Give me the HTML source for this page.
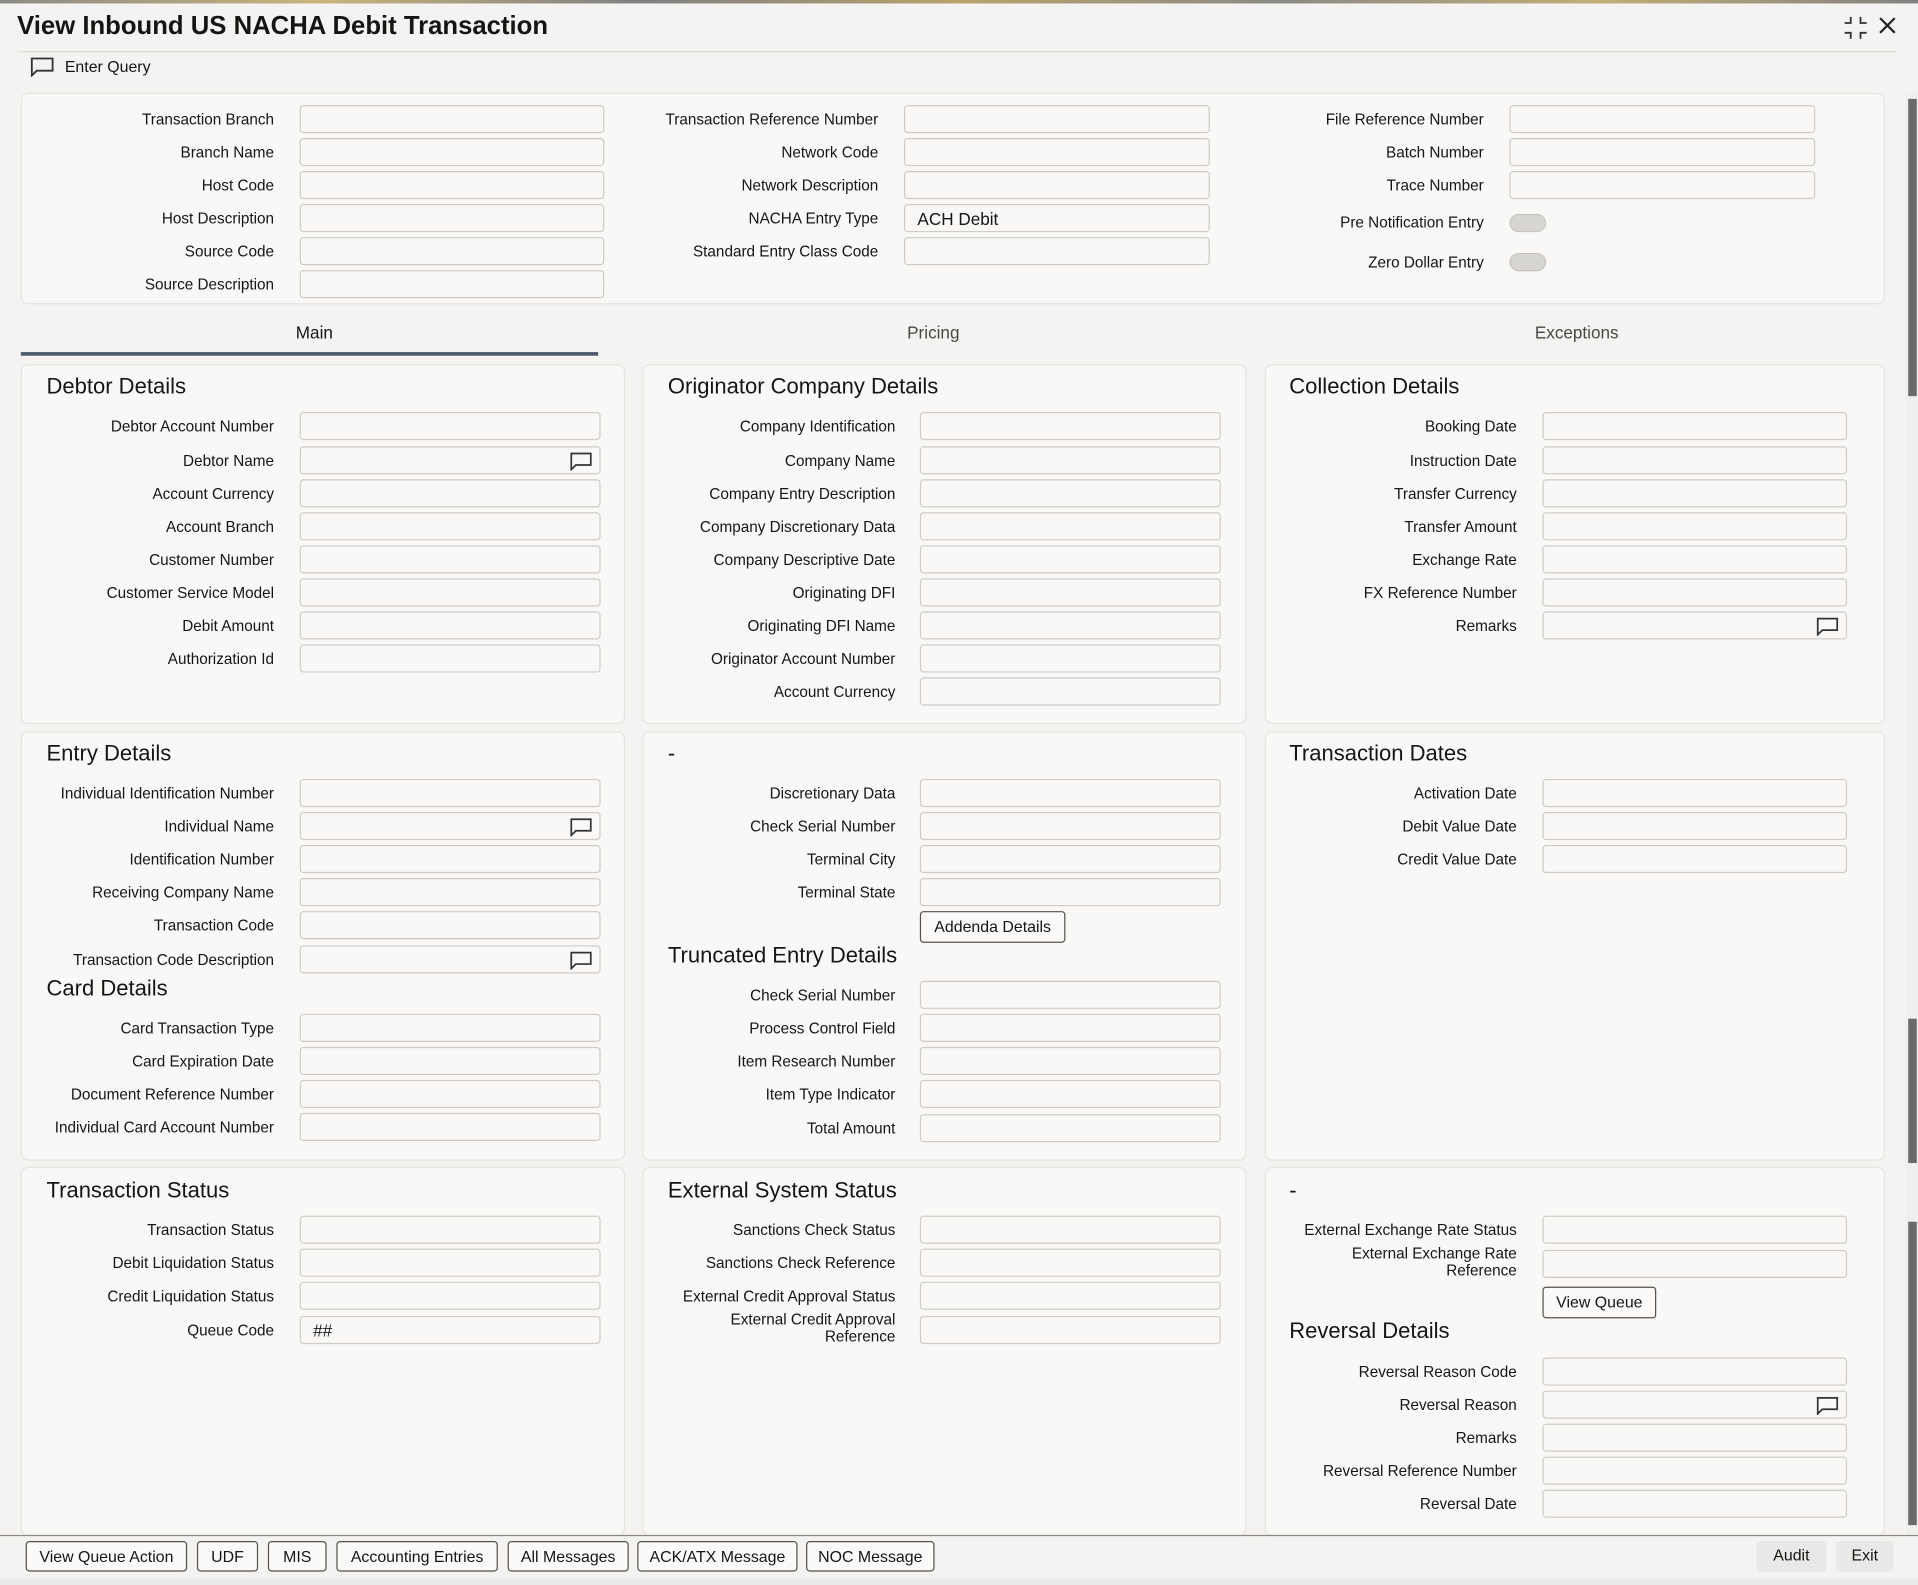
<!DOCTYPE html>
<html><head><meta charset="utf-8"><style>
html,body{margin:0;padding:0;background:#f4f3f1;overflow:hidden}
body{width:1918px;height:1585px;position:relative}
#s{position:absolute;left:0;top:1px;width:1568px;height:1296px;transform:scale(1.22321);transform-origin:0 0;font-family:"Liberation Sans",sans-serif;color:#161513;font-size:12.5px}
.abs{position:absolute}
.pan{position:absolute;background:#f9f8f7;border:1px solid #e6e4e1;border-radius:6px}
.f{position:absolute;left:0;width:1568px;height:24px}
.f .l{position:absolute;left:0;text-align:right;line-height:24px;white-space:nowrap}
.f .i{position:absolute;top:0;height:23px;border:1px solid #cfccc8;border-radius:3px;background:#f9f8f7;box-sizing:border-box;font-size:14px;line-height:22px;padding-left:10px}
.h1 .l{width:224px}.h1 .i{left:245px;width:249px}
.h2 .l{width:718px}.h2 .i{left:739px;width:250px}
.h3 .l{width:1213px}.h3 .i{left:1234px;width:250px}
.p1 .l{width:224px}.p1 .i{left:245px;width:246px}
.p2 .l{width:732px}.p2 .i{left:752px;width:246px}
.p3 .l{width:1240px}.p3 .i{left:1261px;width:249px}
.two .l{line-height:14px;top:-4px}
.hd{position:absolute;font-size:18px;color:#161513}
.tab{position:absolute;top:263px;font-size:14px;color:#4a4845;transform:translateX(-50%)}
.btn{position:absolute;top:1259px;height:25px;border:1px solid #55524e;border-radius:3px;box-sizing:border-box;font-size:13px;line-height:23px;text-align:center;background:#fbfaf9}
.tg{position:absolute;width:30px;height:15px;border-radius:8px;background:#d8d6d3;border:1px solid #c8c5c1;box-sizing:border-box}
.ic{position:absolute;right:6px;top:4px}
</style></head><body><div id="s">
<div class="abs" style="left:0;top:-1px;width:1568px;height:3px;background:linear-gradient(90deg,#8a8a86,#c9b47a,#7d7f82,#b9a36a,#8a8a86,#c2ae75,#808080)"></div>
<div class="abs" style="left:14px;top:9px;font-size:21px;font-weight:bold">View Inbound US NACHA Debit Transaction</div>
<svg class="abs" style="left:1507px;top:12px" width="20" height="20" viewBox="0 0 20 20" fill="none" stroke="#333" stroke-width="1.5"><path d="M1 6h5V1M14 1v5h5M1 14h5v5M14 19v-5h5"/></svg>
<svg class="abs" style="left:1536px;top:13px" width="14" height="14" viewBox="0 0 14 14" stroke="#222" stroke-width="1.8"><path d="M1 1l12 12M13 1L1 13"/></svg>
<div class="abs" style="left:14px;top:41px;width:1536px;height:1px;background:#dcdad6"></div>
<svg class="abs" style="left:25px;top:46px" width="19" height="16" viewBox="0 0 19 16" fill="none" stroke="#333" stroke-width="1.5"><path d="M1 1h17v10H5l-4 4z"/></svg>
<div class="abs" style="left:53px;top:46px;font-size:13px">Enter Query</div>

<div class="pan" style="left:17px;top:75px;width:1522px;height:171px"></div>
<div class="f h1" style="top:85px"><span class="l">Transaction Branch</span><span class="i"></span></div>
<div class="f h1" style="top:112px"><span class="l">Branch Name</span><span class="i"></span></div>
<div class="f h1" style="top:139px"><span class="l">Host Code</span><span class="i"></span></div>
<div class="f h1" style="top:166px"><span class="l">Host Description</span><span class="i"></span></div>
<div class="f h1" style="top:193px"><span class="l">Source Code</span><span class="i"></span></div>
<div class="f h1" style="top:220px"><span class="l">Source Description</span><span class="i"></span></div>
<div class="f h2" style="top:85px"><span class="l">Transaction Reference Number</span><span class="i"></span></div>
<div class="f h2" style="top:112px"><span class="l">Network Code</span><span class="i"></span></div>
<div class="f h2" style="top:139px"><span class="l">Network Description</span><span class="i"></span></div>
<div class="f h2" style="top:166px"><span class="l">NACHA Entry Type</span><span class="i">ACH Debit</span></div>
<div class="f h2" style="top:193px"><span class="l">Standard Entry Class Code</span><span class="i"></span></div>
<div class="f h3" style="top:85px"><span class="l">File Reference Number</span><span class="i"></span></div>
<div class="f h3" style="top:112px"><span class="l">Batch Number</span><span class="i"></span></div>
<div class="f h3" style="top:139px"><span class="l">Trace Number</span><span class="i"></span></div>
<div class="f h3" style="top:169px"><span class="l">Pre Notification Entry</span></div>
<div class="tg" style="left:1234px;top:174px"></div>
<div class="f h3" style="top:202px"><span class="l">Zero Dollar Entry</span></div>
<div class="tg" style="left:1234px;top:206px"></div>

<div class="tab" style="left:257px;color:#161513">Main</div>
<div class="tab" style="left:763px">Pricing</div>
<div class="tab" style="left:1289px">Exceptions</div>
<div class="abs" style="left:17px;top:287px;width:472px;height:3px;background:#4f5a6d"></div>

<div class="pan" style="left:17px;top:297px;width:492px;height:292px"></div>
<div class="pan" style="left:525px;top:297px;width:492px;height:292px"></div>
<div class="pan" style="left:1034px;top:297px;width:505px;height:292px"></div>
<div class="pan" style="left:17px;top:597px;width:492px;height:349px"></div>
<div class="pan" style="left:525px;top:597px;width:492px;height:349px"></div>
<div class="pan" style="left:1034px;top:597px;width:505px;height:349px"></div>
<div class="pan" style="left:17px;top:953px;width:492px;height:300px"></div>
<div class="pan" style="left:525px;top:953px;width:492px;height:300px"></div>
<div class="pan" style="left:1034px;top:953px;width:505px;height:300px"></div>

<div class="hd" style="left:38px;top:305px">Debtor Details</div>
<div class="f p1" style="top:336px"><span class="l">Debtor Account Number</span><span class="i"></span></div>
<div class="f p1" style="top:364px"><span class="l">Debtor Name</span><span class="i"><svg class="ic" width="18" height="15" viewBox="0 0 19 16" fill="none" stroke="#333" stroke-width="1.5"><path d="M1 1h17v10H5l-4 4z"/></svg></span></div>
<div class="f p1" style="top:391px"><span class="l">Account Currency</span><span class="i"></span></div>
<div class="f p1" style="top:418px"><span class="l">Account Branch</span><span class="i"></span></div>
<div class="f p1" style="top:445px"><span class="l">Customer Number</span><span class="i"></span></div>
<div class="f p1" style="top:472px"><span class="l">Customer Service Model</span><span class="i"></span></div>
<div class="f p1" style="top:499px"><span class="l">Debit Amount</span><span class="i"></span></div>
<div class="f p1" style="top:526px"><span class="l">Authorization Id</span><span class="i"></span></div>

<div class="hd" style="left:546px;top:305px">Originator Company Details</div>
<div class="f p2" style="top:336px"><span class="l">Company Identification</span><span class="i"></span></div>
<div class="f p2" style="top:364px"><span class="l">Company Name</span><span class="i"></span></div>
<div class="f p2" style="top:391px"><span class="l">Company Entry Description</span><span class="i"></span></div>
<div class="f p2" style="top:418px"><span class="l">Company Discretionary Data</span><span class="i"></span></div>
<div class="f p2" style="top:445px"><span class="l">Company Descriptive Date</span><span class="i"></span></div>
<div class="f p2" style="top:472px"><span class="l">Originating DFI</span><span class="i"></span></div>
<div class="f p2" style="top:499px"><span class="l">Originating DFI Name</span><span class="i"></span></div>
<div class="f p2" style="top:526px"><span class="l">Originator Account Number</span><span class="i"></span></div>
<div class="f p2" style="top:553px"><span class="l">Account Currency</span><span class="i"></span></div>

<div class="hd" style="left:1054px;top:305px">Collection Details</div>
<div class="f p3" style="top:336px"><span class="l">Booking Date</span><span class="i"></span></div>
<div class="f p3" style="top:364px"><span class="l">Instruction Date</span><span class="i"></span></div>
<div class="f p3" style="top:391px"><span class="l">Transfer Currency</span><span class="i"></span></div>
<div class="f p3" style="top:418px"><span class="l">Transfer Amount</span><span class="i"></span></div>
<div class="f p3" style="top:445px"><span class="l">Exchange Rate</span><span class="i"></span></div>
<div class="f p3" style="top:472px"><span class="l">FX Reference Number</span><span class="i"></span></div>
<div class="f p3" style="top:499px"><span class="l">Remarks</span><span class="i"><svg class="ic" width="18" height="15" viewBox="0 0 19 16" fill="none" stroke="#333" stroke-width="1.5"><path d="M1 1h17v10H5l-4 4z"/></svg></span></div>

<div class="hd" style="left:38px;top:605px">Entry Details</div>
<div class="f p1" style="top:636px"><span class="l">Individual Identification Number</span><span class="i"></span></div>
<div class="f p1" style="top:663px"><span class="l">Individual Name</span><span class="i"><svg class="ic" width="18" height="15" viewBox="0 0 19 16" fill="none" stroke="#333" stroke-width="1.5"><path d="M1 1h17v10H5l-4 4z"/></svg></span></div>
<div class="f p1" style="top:690px"><span class="l">Identification Number</span><span class="i"></span></div>
<div class="f p1" style="top:717px"><span class="l">Receiving Company Name</span><span class="i"></span></div>
<div class="f p1" style="top:744px"><span class="l">Transaction Code</span><span class="i"></span></div>
<div class="f p1" style="top:772px"><span class="l">Transaction Code Description</span><span class="i"><svg class="ic" width="18" height="15" viewBox="0 0 19 16" fill="none" stroke="#333" stroke-width="1.5"><path d="M1 1h17v10H5l-4 4z"/></svg></span></div>
<div class="hd" style="left:38px;top:797px">Card Details</div>
<div class="f p1" style="top:828px"><span class="l">Card Transaction Type</span><span class="i"></span></div>
<div class="f p1" style="top:855px"><span class="l">Card Expiration Date</span><span class="i"></span></div>
<div class="f p1" style="top:882px"><span class="l">Document Reference Number</span><span class="i"></span></div>
<div class="f p1" style="top:909px"><span class="l">Individual Card Account Number</span><span class="i"></span></div>

<div class="hd" style="left:546px;top:605px">-</div>
<div class="f p2" style="top:636px"><span class="l">Discretionary Data</span><span class="i"></span></div>
<div class="f p2" style="top:663px"><span class="l">Check Serial Number</span><span class="i"></span></div>
<div class="f p2" style="top:690px"><span class="l">Terminal City</span><span class="i"></span></div>
<div class="f p2" style="top:717px"><span class="l">Terminal State</span><span class="i"></span></div>
<div class="btn" style="left:752px;top:744px;width:119px;height:26px;line-height:24px">Addenda Details</div>
<div class="hd" style="left:546px;top:770px">Truncated Entry Details</div>
<div class="f p2" style="top:801px"><span class="l">Check Serial Number</span><span class="i"></span></div>
<div class="f p2" style="top:828px"><span class="l">Process Control Field</span><span class="i"></span></div>
<div class="f p2" style="top:855px"><span class="l">Item Research Number</span><span class="i"></span></div>
<div class="f p2" style="top:882px"><span class="l">Item Type Indicator</span><span class="i"></span></div>
<div class="f p2" style="top:910px"><span class="l">Total Amount</span><span class="i"></span></div>

<div class="hd" style="left:1054px;top:605px">Transaction Dates</div>
<div class="f p3" style="top:636px"><span class="l">Activation Date</span><span class="i"></span></div>
<div class="f p3" style="top:663px"><span class="l">Debit Value Date</span><span class="i"></span></div>
<div class="f p3" style="top:690px"><span class="l">Credit Value Date</span><span class="i"></span></div>

<div class="hd" style="left:38px;top:962px">Transaction Status</div>
<div class="f p1" style="top:993px"><span class="l">Transaction Status</span><span class="i"></span></div>
<div class="f p1" style="top:1020px"><span class="l">Debit Liquidation Status</span><span class="i"></span></div>
<div class="f p1" style="top:1047px"><span class="l">Credit Liquidation Status</span><span class="i"></span></div>
<div class="f p1" style="top:1075px"><span class="l">Queue Code</span><span class="i">##</span></div>

<div class="hd" style="left:546px;top:962px">External System Status</div>
<div class="f p2" style="top:993px"><span class="l">Sanctions Check Status</span><span class="i"></span></div>
<div class="f p2" style="top:1020px"><span class="l">Sanctions Check Reference</span><span class="i"></span></div>
<div class="f p2" style="top:1047px"><span class="l">External Credit Approval Status</span><span class="i"></span></div>
<div class="f p2 two" style="top:1075px"><span class="l">External Credit Approval<br>Reference</span><span class="i"></span></div>

<div class="hd" style="left:1054px;top:962px">-</div>
<div class="f p3" style="top:993px"><span class="l">External Exchange Rate Status</span><span class="i"></span></div>
<div class="f p3 two" style="top:1021px"><span class="l">External Exchange Rate<br>Reference</span><span class="i"></span></div>
<div class="btn" style="left:1261px;top:1051px;width:93px;height:26px;line-height:24px">View Queue</div>
<div class="hd" style="left:1054px;top:1077px">Reversal Details</div>
<div class="f p3" style="top:1109px"><span class="l">Reversal Reason Code</span><span class="i"></span></div>
<div class="f p3" style="top:1136px"><span class="l">Reversal Reason</span><span class="i"><svg class="ic" width="18" height="15" viewBox="0 0 19 16" fill="none" stroke="#333" stroke-width="1.5"><path d="M1 1h17v10H5l-4 4z"/></svg></span></div>
<div class="f p3" style="top:1163px"><span class="l">Remarks</span><span class="i"></span></div>
<div class="f p3" style="top:1190px"><span class="l">Reversal Reference Number</span><span class="i"></span></div>
<div class="f p3" style="top:1217px"><span class="l">Reversal Date</span><span class="i"></span></div>

<div class="abs" style="left:1558px;top:75px;width:10px;height:1180px;background:#f0efed"></div>
<div class="abs" style="left:1560px;top:80px;width:7px;height:243px;background:#6a6a6a"></div>
<div class="abs" style="left:1560px;top:832px;width:7px;height:118px;background:#6a6a6a"></div>
<div class="abs" style="left:1560px;top:998px;width:7px;height:248px;background:#6a6a6a"></div>

<div class="abs" style="left:0;top:1254px;width:1568px;height:1px;background:#8d8a86"></div>
<div class="btn" style="left:21px;width:132px">View Queue Action</div>
<div class="btn" style="left:161px;width:50px">UDF</div>
<div class="btn" style="left:219px;width:48px">MIS</div>
<div class="btn" style="left:275px;width:132px">Accounting Entries</div>
<div class="btn" style="left:415px;width:99px">All Messages</div>
<div class="btn" style="left:521px;width:131px">ACK/ATX Message</div>
<div class="btn" style="left:659px;width:105px">NOC Message</div>
<div class="btn" style="left:1436px;width:57px;border:none;background:#e9e8e6">Audit</div>
<div class="btn" style="left:1501px;width:47px;border:none;background:#e9e8e6">Exit</div>
<div class="abs" style="left:0;top:1290px;width:1568px;height:6px;background:#ebeae8"></div>
</div></body></html>
